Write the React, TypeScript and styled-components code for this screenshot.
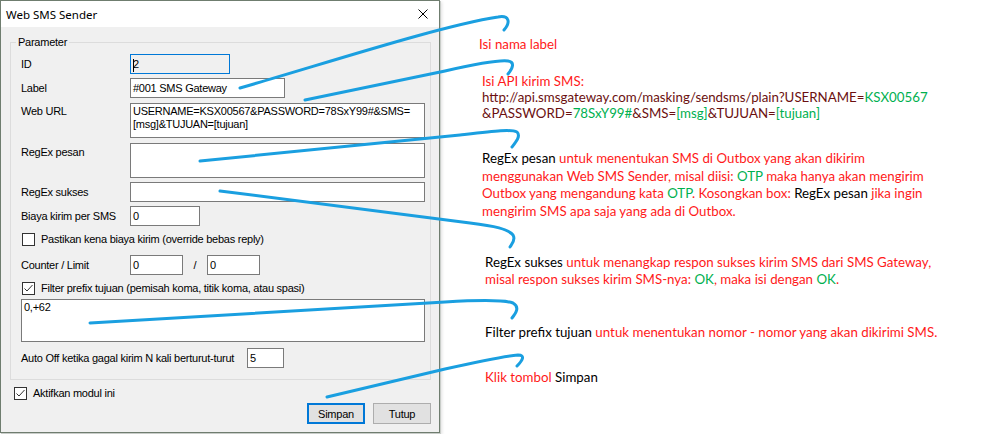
import React from 'react';
import styled, { createGlobalStyle } from 'styled-components';

const Global = createGlobalStyle`
  html, body { margin: 0; padding: 0; background: #fff; }
  body { width: 993px; height: 434px; overflow: hidden; }
`;

const Page = styled.div`
  position: relative;
  display: flex;
  align-items: flex-start;
  width: 993px;
  height: 434px;
  background: #fff;
`;

const Window = styled.div`
  box-sizing: border-box;
  flex: none;
  width: 440px;
  border: 1px solid #6f7d6f;
  box-shadow: 1px 1px 0 #c9cdc9, 2px 2px 3px rgba(0, 0, 0, 0.12);
  background: #f0f0f0;
  display: flex;
  flex-direction: column;
  font-family: "Liberation Sans", Arial, sans-serif;
  font-size: 11px;
  letter-spacing: -0.25px;
  color: #000;
`;

const TitleBar = styled.div`
  height: 26px;
  background: #fff;
  display: flex;
  align-items: center;
  justify-content: space-between;
  padding: 0 11px 0 5px;
`;

const Title = styled.span`
  font-family: "Noto Sans", "Open Sans", sans-serif;
  font-size: 11.5px;
  letter-spacing: 0;
`;

const Client = styled.div`
  display: flex;
  flex-direction: column;
  padding: 9px 8px 8px 9px;
`;

const GroupBox = styled.fieldset`
  margin: 0;
  min-width: 0;
  border: 1px solid #dcdcdc;
  padding: 5px 5px 11px 10px;
`;

const Legend = styled.legend`
  padding: 0 2px;
  margin-left: -5px;
  line-height: 13px;
`;

const Rows = styled.div`
  display: flex;
  flex-direction: column;
`;

const Row = styled.div<{ $mt?: number; $start?: boolean; $ml?: number }>`
  display: flex;
  align-items: ${p => (p.$start ? 'flex-start' : 'center')};
  margin-top: ${p => p.$mt ?? 0}px;
  margin-left: ${p => p.$ml ?? 0}px;
`;

const FieldLabel = styled.span<{ $w?: number; $pt?: number }>`
  flex: none;
  width: ${p => p.$w ?? 109}px;
  padding-top: ${p => p.$pt ?? 0}px;
  line-height: 13px;
  white-space: nowrap;
`;

const TextBox = styled.div<{ $w: number; $h?: number; $focus?: boolean; $readonly?: boolean; $multi?: boolean }>`
  box-sizing: border-box;
  flex: none;
  width: ${p => p.$w}px;
  height: ${p => p.$h ?? 20}px;
  border: 1px solid ${p => (p.$focus ? '#0078d7' : '#7a7a7a')};
  background: ${p => (p.$readonly ? '#f0f0f0' : '#fff')};
  padding: ${p => (p.$multi ? '1px 2px' : '0 2px')};
  line-height: ${p => (p.$multi ? '13px' : '18px')};
  white-space: ${p => (p.$multi ? 'pre-wrap' : 'nowrap')};
  overflow: hidden;
`;

const Caret = styled.span`
  display: inline-block;
  width: 1px;
  height: 13px;
  background: #000;
  vertical-align: middle;
  margin-right: -1px;
`;

const Sep = styled.span`
  width: 24px;
  text-align: center;
  flex: none;
`;

const CheckBox = styled.span`
  box-sizing: border-box;
  flex: none;
  display: inline-flex;
  align-items: center;
  justify-content: center;
  width: 13px;
  height: 13px;
  border: 1px solid #333;
  background: #fff;
  margin-right: 6px;
`;

const CheckText = styled.span`
  line-height: 13px;
  white-space: nowrap;
`;

const Buttons = styled.div`
  display: flex;
  justify-content: flex-end;
  gap: 8px;
  margin-top: 3px;
`;

const Button = styled.div<{ $primary?: boolean }>`
  box-sizing: border-box;
  width: 58px;
  height: 21px;
  display: flex;
  align-items: center;
  justify-content: center;
  background: #e1e1e1;
  border: ${p => (p.$primary ? '2px solid #0078d7' : '1px solid #adadad')};
`;

const Notes = styled.div`
  flex: 1;
  display: flex;
  flex-direction: column;
  padding-left: 42px;
  font-family: Lato, "Open Sans", sans-serif;
  font-size: 13.3px;
  color: #ff1a1a;
  white-space: nowrap;
`;

const Note = styled.div<{ $mt: number; $dx?: number; $lh?: number }>`
  margin-top: ${p => p.$mt}px;
  margin-left: ${p => p.$dx ?? 0}px;
  line-height: ${p => p.$lh ?? 17}px;
`;

const B = styled.span`color: #000;`;
const G = styled.span`color: #00b050;`;
const D = styled.span`color: #6b1010;`;

const Overlay = styled.svg`
  position: absolute;
  left: 0;
  top: 0;
  pointer-events: none;
`;

const Check: React.FC<{ checked?: boolean }> = ({ checked }) => (
  <CheckBox>
    {checked && (
      <svg width="11" height="11" viewBox="0 0 11 11">
        <polyline points="1.5,5.5 4,8 9.5,2" fill="none" stroke="#333" strokeWidth="1" />
      </svg>
    )}
  </CheckBox>
);

const arrows = [
  'M240,88 C330,62 440,26 498,17 C509,15 511,22 504,30',
  'M305,100 L445,71 C480,63 500,60 508,61 C515,62 513,68 508,74',
  'M200,161 L460,135 C495,131 511,129 517,132 C521,136 516,142 512,147',
  'M220,191 L470,223 C495,226 508,229 513,235 C516,240 512,244 510,247',
  'M90,323 L445,302 C480,300 505,300 513,303 C520,307 516,313 512,318',
  'M327,397 L445,369 C480,361 505,356 518,355 C526,355 522,361 517,366',
];

export default function App() {
  return (
    <Page>
      <Global />
      <Window>
        <TitleBar>
          <Title>Web SMS Sender</Title>
          <svg width="10" height="10" viewBox="0 0 10 10">
            <path d="M0.5,0.5 L9.5,9.5 M9.5,0.5 L0.5,9.5" stroke="#000" strokeWidth="1" fill="none" />
          </svg>
        </TitleBar>
        <Client>
          <GroupBox>
            <Legend>Parameter</Legend>
            <Rows>
              <Row>
                <FieldLabel>ID</FieldLabel>
                <TextBox $w={100} $focus $readonly><Caret />2</TextBox>
              </Row>
              <Row $mt={4}>
                <FieldLabel>Label</FieldLabel>
                <TextBox $w={155}>#001 SMS Gateway</TextBox>
              </Row>
              <Row $mt={5} $start>
                <FieldLabel $pt={2}>Web URL</FieldLabel>
                <TextBox $w={295} $h={35} $multi>
                  {'USERNAME=KSX00567&PASSWORD=78SxY99#&SMS=\n[msg]&TUJUAN=[tujuan]'}
                </TextBox>
              </Row>
              <Row $mt={5} $start>
                <FieldLabel $pt={3}>RegEx pesan</FieldLabel>
                <TextBox $w={295} $h={35} $multi />
              </Row>
              <Row $mt={4}>
                <FieldLabel>RegEx sukses</FieldLabel>
                <TextBox $w={295} />
              </Row>
              <Row $mt={4}>
                <FieldLabel>Biaya kirim per SMS</FieldLabel>
                <TextBox $w={70}>0</TextBox>
              </Row>
              <Row $mt={7} $ml={1}>
                <Check />
                <CheckText>Pastikan kena biaya kirim (override bebas reply)</CheckText>
              </Row>
              <Row $mt={9}>
                <FieldLabel>Counter / Limit</FieldLabel>
                <TextBox $w={53}>0</TextBox>
                <Sep>/</Sep>
                <TextBox $w={53}>0</TextBox>
              </Row>
              <Row $mt={7} $ml={1}>
                <Check checked />
                <CheckText>Filter prefix tujuan (pemisah koma, titik koma, atau spasi)</CheckText>
              </Row>
              <Row $mt={4}>
                <TextBox $w={404} $h={43} $multi>0,+62</TextBox>
              </Row>
              <Row $mt={6}>
                <FieldLabel $w={226}>Auto Off ketika gagal kirim N kali berturut-turut</FieldLabel>
                <TextBox $w={37}>5</TextBox>
              </Row>
            </Rows>
          </GroupBox>
          <Row $mt={7} $ml={4}>
            <Check checked />
            <CheckText>Aktifkan modul ini</CheckText>
          </Row>
          <Buttons>
            <Button $primary>Simpan</Button>
            <Button>Tutup</Button>
          </Buttons>
        </Client>
      </Window>
      <Notes>
        <Note $mt={36} $dx={-3}>Isi nama label</Note>
        <Note $mt={20} $lh={16}>
          Isi API kirim SMS:
          <br />
          <D>http://api.smsgateway.com/masking/sendsms/plain?USERNAME=</D>
          <G>KSX00567</G>
          <br />
          <D>&amp;PASSWORD=</D>
          <G>78SxY99#</G>
          <D>&amp;SMS=</D>
          <G>[msg]</G>
          <D>&amp;TUJUAN=</D>
          <G>[tujuan]</G>
        </Note>
        <Note $mt={29} $lh={17.7}>
          <B>RegEx pesan</B> untuk menentukan SMS di Outbox yang akan dikirim
          <br />
          menggunakan Web SMS Sender, misal diisi: <G>OTP</G> maka hanya akan mengirim
          <br />
          Outbox yang mengandung kata <G>OTP</G>. Kosongkan box: <B>RegEx pesan</B> jika ingin
          <br />
          mengirim SMS apa saja yang ada di Outbox.
        </Note>
        <Note $mt={33} $dx={3}>
          <B>RegEx sukses</B> untuk menangkap respon sukses kirim SMS dari SMS Gateway,
          <br />
          misal respon sukses kirim SMS-nya: <G>OK</G>, maka isi dengan <G>OK</G>.
        </Note>
        <Note $mt={36} $dx={3}>
          <B>Filter prefix tujuan</B> untuk menentukan nomor - nomor yang akan dikirimi SMS.
        </Note>
        <Note $mt={28} $dx={3}>
          Klik tombol <B>Simpan</B>
        </Note>
      </Notes>
      <Overlay width="993" height="434" viewBox="0 0 993 434">
        {arrows.map((d, i) => (
          <path key={i} d={d} fill="none" stroke="#1a9fe0" strokeWidth="3" strokeLinecap="round" strokeLinejoin="round" />
        ))}
      </Overlay>
    </Page>
  );
}
